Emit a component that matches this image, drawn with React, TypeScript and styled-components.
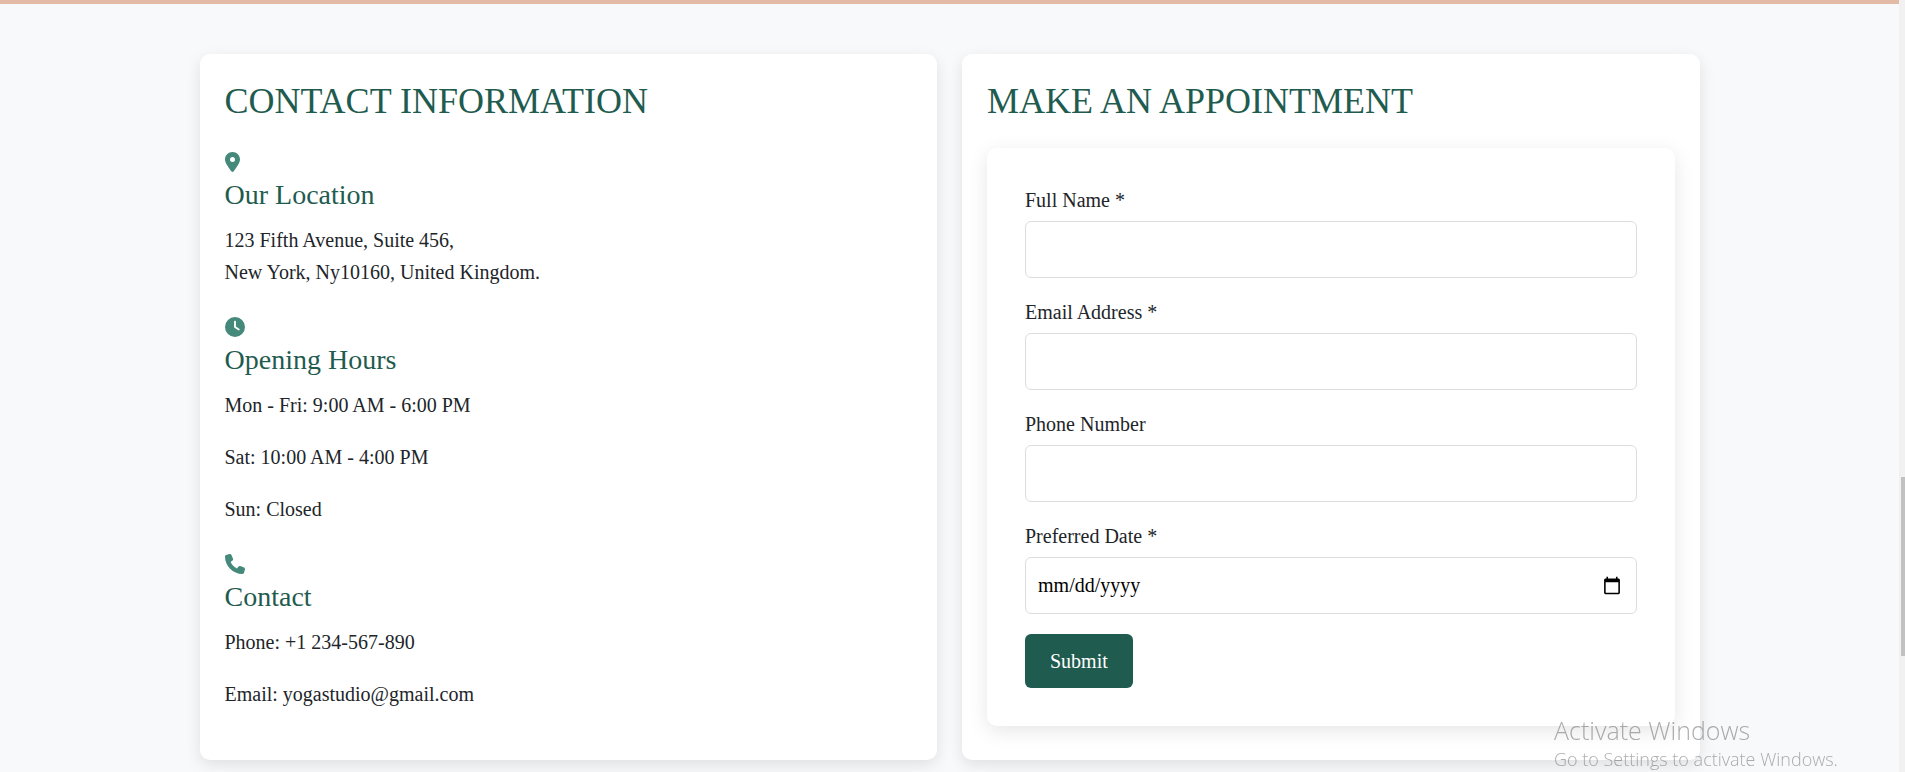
import React from "react";
import styled, { createGlobalStyle } from "styled-components";
import { FaClock, FaLocationDot, FaPhone } from "react-icons/fa6";

const serif = '"Liberation Serif", "Times New Roman", serif';
const green = "#1f5c4f";

const GlobalStyle = createGlobalStyle`
  *, *::before, *::after { box-sizing: border-box; }
  body {
    margin: 0;
    background: #f8f9fb;
    color: #212529;
    font-family: ${serif};
    font-size: 20px;
    line-height: 32px;
  }
`;

const Page = styled.div`
  display: flex;
  height: 100vh;
`;

const Main = styled.main`
  flex: 1;
  min-width: 0;
  overflow-y: auto;
  scrollbar-width: none;
  border-top: 4px solid #e2baa5;
`;

const ScrollTrack = styled.div`
  flex: none;
  width: 6px;
  display: flex;
  flex-direction: column;
  align-items: flex-end;
  justify-content: flex-end;
  padding-bottom: 116px;
  background: #f1f1f1;
`;

const ScrollThumb = styled.div`
  width: 4px;
  height: 179px;
  background: #c1c1c1;
`;

const Columns = styled.div`
  display: grid;
  grid-template-columns: repeat(auto-fit, minmax(min(420px, 100%), 1fr));
  gap: 25px;
  max-width: 1500px;
  margin: 0 auto;
  padding: 50px 0;
`;

const Card = styled.section`
  padding: 25px;
  background: #fff;
  border-radius: 10px;
  box-shadow: 0 5px 15px rgba(0, 0, 0, 0.1);
`;

const Title = styled.h2`
  margin: 0 0 25px;
  color: ${green};
  font-size: 36px;
  font-weight: 400;
  line-height: 44px;
  text-transform: uppercase;
`;

const InfoBlock = styled.div`
  margin-bottom: 25px;
`;

const IconLine = styled.div`
  display: flex;
  align-items: center;
  height: 28px;
  color: #45897b;
  font-size: 20px;
`;

const InfoTitle = styled.h3`
  margin: 0 0 11px;
  color: ${green};
  font-size: 28px;
  font-weight: 400;
  line-height: 37px;
`;

const InfoText = styled.p`
  margin: 0;

  & + & {
    margin-top: 20px;
  }
`;

const Form = styled.form`
  padding: 38px;
  background: #fff;
  border-radius: 10px;
  box-shadow: 0 5px 20px rgba(0, 0, 0, 0.1);
`;

const Field = styled.div`
  margin-bottom: 20px;
`;

const Label = styled.label`
  display: block;
  margin-bottom: 7px;
  line-height: 28px;
`;

const Input = styled.input`
  display: block;
  width: 100%;
  height: 57px;
  padding: 12px;
  border: 1px solid #dbdddf;
  border-radius: 6px;
  background: #fff;
  color: #000;
  font: 20px ${serif};

  &::-webkit-datetime-edit-month-field,
  &::-webkit-datetime-edit-day-field,
  &::-webkit-datetime-edit-year-field {
    padding: 0;
  }
`;

const SubmitButton = styled.button`
  display: block;
  padding: 12px 25px;
  border: 0;
  border-radius: 6px;
  background: ${green};
  color: #fff;
  font: 20px/30px ${serif};
  cursor: pointer;
`;

const Notice = styled.aside`
  position: fixed;
  right: 67px;
  bottom: 0;
  width: 284px;
  color: rgba(105, 105, 105, 0.55);
  font-family: "Open Sans", "Noto Sans", sans-serif;
  font-weight: 300;
  white-space: nowrap;
  pointer-events: none;
`;

const NoticeTitle = styled.div`
  font-size: 25px;
  line-height: 34px;
`;

const NoticeText = styled.div`
  font-size: 18px;
  line-height: 25px;
`;

const info = [
  {
    title: "Our Location",
    icon: <FaLocationDot preserveAspectRatio="xMinYMid meet" />,
    lines: [
      <>
        123 Fifth Avenue, Suite 456,
        <br />
        New York, Ny10160, United Kingdom.
      </>,
    ],
  },
  {
    title: "Opening Hours",
    icon: <FaClock />,
    lines: ["Mon - Fri: 9:00 AM - 6:00 PM", "Sat: 10:00 AM - 4:00 PM", "Sun: Closed"],
  },
  {
    title: "Contact",
    icon: <FaPhone />,
    lines: ["Phone: +1 234-567-890", "Email: yogastudio@gmail.com"],
  },
];

const fields = [
  { id: "name", label: "Full Name *", type: "text", required: true },
  { id: "email", label: "Email Address *", type: "email", required: true },
  { id: "phone", label: "Phone Number", type: "tel", required: false },
  { id: "date", label: "Preferred Date *", type: "date", required: true },
];

export default function App() {
  return (
    <>
      <GlobalStyle />
      <Page>
        <Main>
          <Columns>
            <Card>
              <Title>Contact Information</Title>
              {info.map((block) => (
                <InfoBlock key={block.title}>
                  <IconLine>{block.icon}</IconLine>
                  <InfoTitle>{block.title}</InfoTitle>
                  {block.lines.map((line, i) => (
                    <InfoText key={i}>{line}</InfoText>
                  ))}
                </InfoBlock>
              ))}
            </Card>
            <Card>
              <Title>Make an Appointment</Title>
              <Form onSubmit={(e) => e.preventDefault()}>
                {fields.map((f) => (
                  <Field key={f.id}>
                    <Label htmlFor={f.id}>{f.label}</Label>
                    <Input id={f.id} name={f.id} type={f.type} required={f.required} />
                  </Field>
                ))}
                <SubmitButton type="submit">Submit</SubmitButton>
              </Form>
            </Card>
          </Columns>
        </Main>
        <ScrollTrack>
          <ScrollThumb />
        </ScrollTrack>
      </Page>
      <Notice>
        <NoticeTitle>Activate Windows</NoticeTitle>
        <NoticeText>Go to Settings to activate Windows.</NoticeText>
      </Notice>
    </>
  );
}
